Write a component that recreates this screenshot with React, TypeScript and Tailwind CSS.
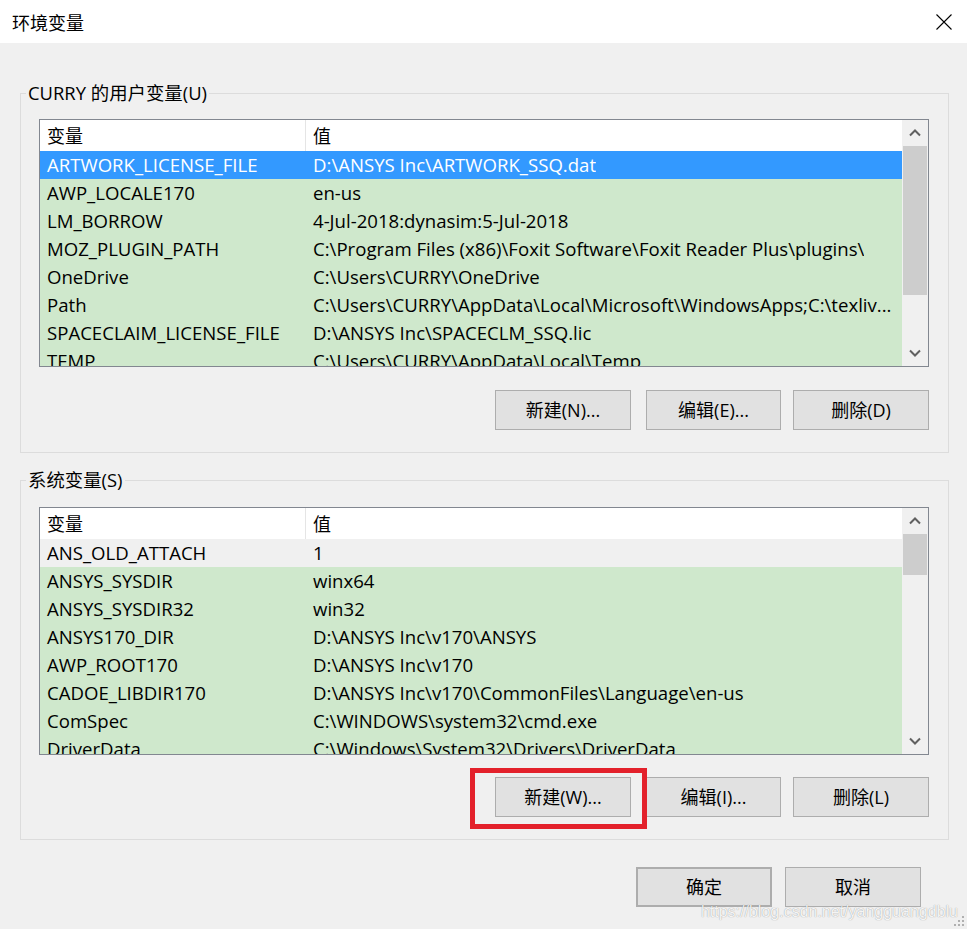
import React from "react";

type Row = { name: string; value: string; kind: "sel" | "gray" | "green" };

const userRows: Row[] = [
  { name: "ARTWORK_LICENSE_FILE", value: "D:\\ANSYS Inc\\ARTWORK_SSQ.dat", kind: "sel" },
  { name: "AWP_LOCALE170", value: "en-us", kind: "green" },
  { name: "LM_BORROW", value: "4-Jul-2018:dynasim:5-Jul-2018", kind: "green" },
  { name: "MOZ_PLUGIN_PATH", value: "C:\\Program Files (x86)\\Foxit Software\\Foxit Reader Plus\\plugins\\", kind: "green" },
  { name: "OneDrive", value: "C:\\Users\\CURRY\\OneDrive", kind: "green" },
  { name: "Path", value: "C:\\Users\\CURRY\\AppData\\Local\\Microsoft\\WindowsApps;C:\\texliv...", kind: "green" },
  { name: "SPACECLAIM_LICENSE_FILE", value: "D:\\ANSYS Inc\\SPACECLM_SSQ.lic", kind: "green" },
  { name: "TEMP", value: "C:\\Users\\CURRY\\AppData\\Local\\Temp", kind: "green" },
];

const sysRows: Row[] = [
  { name: "ANS_OLD_ATTACH", value: "1", kind: "gray" },
  { name: "ANSYS_SYSDIR", value: "winx64", kind: "green" },
  { name: "ANSYS_SYSDIR32", value: "win32", kind: "green" },
  { name: "ANSYS170_DIR", value: "D:\\ANSYS Inc\\v170\\ANSYS", kind: "green" },
  { name: "AWP_ROOT170", value: "D:\\ANSYS Inc\\v170", kind: "green" },
  { name: "CADOE_LIBDIR170", value: "D:\\ANSYS Inc\\v170\\CommonFiles\\Language\\en-us", kind: "green" },
  { name: "ComSpec", value: "C:\\WINDOWS\\system32\\cmd.exe", kind: "green" },
  { name: "DriverData", value: "C:\\Windows\\System32\\Drivers\\DriverData", kind: "green" },
];

function Chevron({ down }: { down?: boolean }) {
  return (
    <svg width="12" height="8" viewBox="0 0 12 8">
      <path
        d={down ? "M1 1.5 L6 6.5 L11 1.5" : "M1 6.5 L6 1.5 L11 6.5"}
        fill="none"
        stroke="#606060"
        strokeWidth="2"
      />
    </svg>
  );
}

function VarList({ rows, thumbClass }: { rows: Row[]; thumbClass: string }) {
  return (
    <div className="flex h-[248px] border border-[#828790] bg-white overflow-hidden text-[18.6px]">
      <div className="flex-1 flex flex-col overflow-hidden">
        <div className="flex h-[31px] shrink-0 bg-white text-black text-[18px]">
          <div className="w-[266px] shrink-0 pl-[7px] leading-[32px] border-r border-[#e5e5e5]">变量</div>
          <div className="pl-[7px] leading-[32px]">值</div>
        </div>
        {rows.map((r) => (
          <div
            key={r.name}
            className={
              "flex h-[28px] shrink-0 leading-[28px] whitespace-nowrap " +
              (r.kind === "sel"
                ? "bg-[#3399ff] text-white"
                : r.kind === "gray"
                ? "bg-[#f0f0f0] text-black"
                : "bg-[#cfe8cc] text-black")
            }
          >
            <div className="w-[266px] shrink-0 pl-[7px] overflow-hidden">{r.name}</div>
            <div className="pl-[7px] overflow-hidden">{r.value}</div>
          </div>
        ))}
      </div>
      <div className="w-[26px] shrink-0 flex flex-col bg-[#f0f0f0]">
        <div className="h-[26px] shrink-0 flex items-center justify-center">
          <Chevron />
        </div>
        <div className={"mx-[1px] shrink-0 bg-[#cdcdcd] " + thumbClass} />
        <div className="flex-1" />
        <div className="h-[26px] shrink-0 flex items-center justify-center">
          <Chevron down />
        </div>
      </div>
    </div>
  );
}

function Btn({ children, className = "" }: { children: React.ReactNode; className?: string }) {
  return (
    <div
      className={
        "h-[40px] shrink-0 bg-[#e1e1e1] border border-[#adadad] flex items-center justify-center text-black " +
        className
      }
    >
      {children}
    </div>
  );
}

export default function App() {
  return (
    <div className="w-[967px] h-[929px] bg-[#f0f0f0] relative overflow-hidden text-[18px] text-black font-['Open_Sans','Noto_Sans_CJK_SC',sans-serif]">
      <div className="h-[43px] bg-white flex items-center justify-between pl-[12px] pr-[15px]">
        <span className="text-[18px] leading-[24px] font-['Noto_Sans_CJK_SC',sans-serif]">环境变量</span>
        <svg width="16" height="16" viewBox="0 0 16 16">
          <path d="M0.5 0.5 L15.5 15.5 M15.5 0.5 L0.5 15.5" stroke="#000" strokeWidth="1.1" />
        </svg>
      </div>

      <fieldset className="ml-[20px] w-[929px] mt-[38px] border border-[#dcdcdc] pl-[18px] pr-[19px] pt-[14px] pb-[22px]">
        <legend className="ml-[-13px] px-[2px] leading-[24px] text-[18.4px]">CURRY 的用户变量(U)</legend>
        <VarList rows={userRows} thumbClass="h-[149px]" />
        <div className="flex justify-end mt-[23px]">
          <Btn className="w-[136px]">新建(N)...</Btn>
          <Btn className="w-[135px] ml-[15px]">编辑(E)...</Btn>
          <Btn className="w-[136px] ml-[12px]">删除(D)</Btn>
        </div>
      </fieldset>

      <fieldset className="ml-[20px] w-[929px] mt-[15px] border border-[#dcdcdc] pl-[18px] pr-[19px] pt-[15px] pb-[22px]">
        <legend className="ml-[-13px] px-[2px] leading-[24px] text-[18.4px]">系统变量(S)</legend>
        <VarList rows={sysRows} thumbClass="h-[41px]" />
        <div className="flex justify-end mt-[22px]">
          <div className="relative">
            <Btn className="w-[136px]">新建(W)...</Btn>
            <div className="absolute left-[-25px] top-[-9px] w-[177px] h-[61px] border-[5px] border-[#e3212b]" />
          </div>
          <Btn className="w-[135px] ml-[15px]">编辑(I)...</Btn>
          <Btn className="w-[136px] ml-[12px]">删除(L)</Btn>
        </div>
      </fieldset>

      <div className="flex justify-end pr-[46px] mt-[27px]">
        <Btn className="w-[136px] border-2 border-[#0078d7]">确定</Btn>
        <Btn className="w-[136px] ml-[13px]">取消</Btn>
      </div>

      <div className="absolute right-[9px] bottom-[7px] text-[16px] leading-[20px] font-['Liberation_Sans',sans-serif] text-white/90 [text-shadow:0_0_1px_rgba(0,0,0,0.45)]">
        https://blog.csdn.net/yangguangdblu
      </div>

      <svg className="absolute right-[2px] bottom-[2px]" width="12" height="12" viewBox="0 0 12 12">
        <rect x="9" y="1" width="2" height="2" fill="#b0b0b0" />
        <rect x="5" y="5" width="2" height="2" fill="#b0b0b0" />
        <rect x="9" y="5" width="2" height="2" fill="#b0b0b0" />
        <rect x="1" y="9" width="2" height="2" fill="#b0b0b0" />
        <rect x="5" y="9" width="2" height="2" fill="#b0b0b0" />
        <rect x="9" y="9" width="2" height="2" fill="#b0b0b0" />
      </svg>
    </div>
  );
}
